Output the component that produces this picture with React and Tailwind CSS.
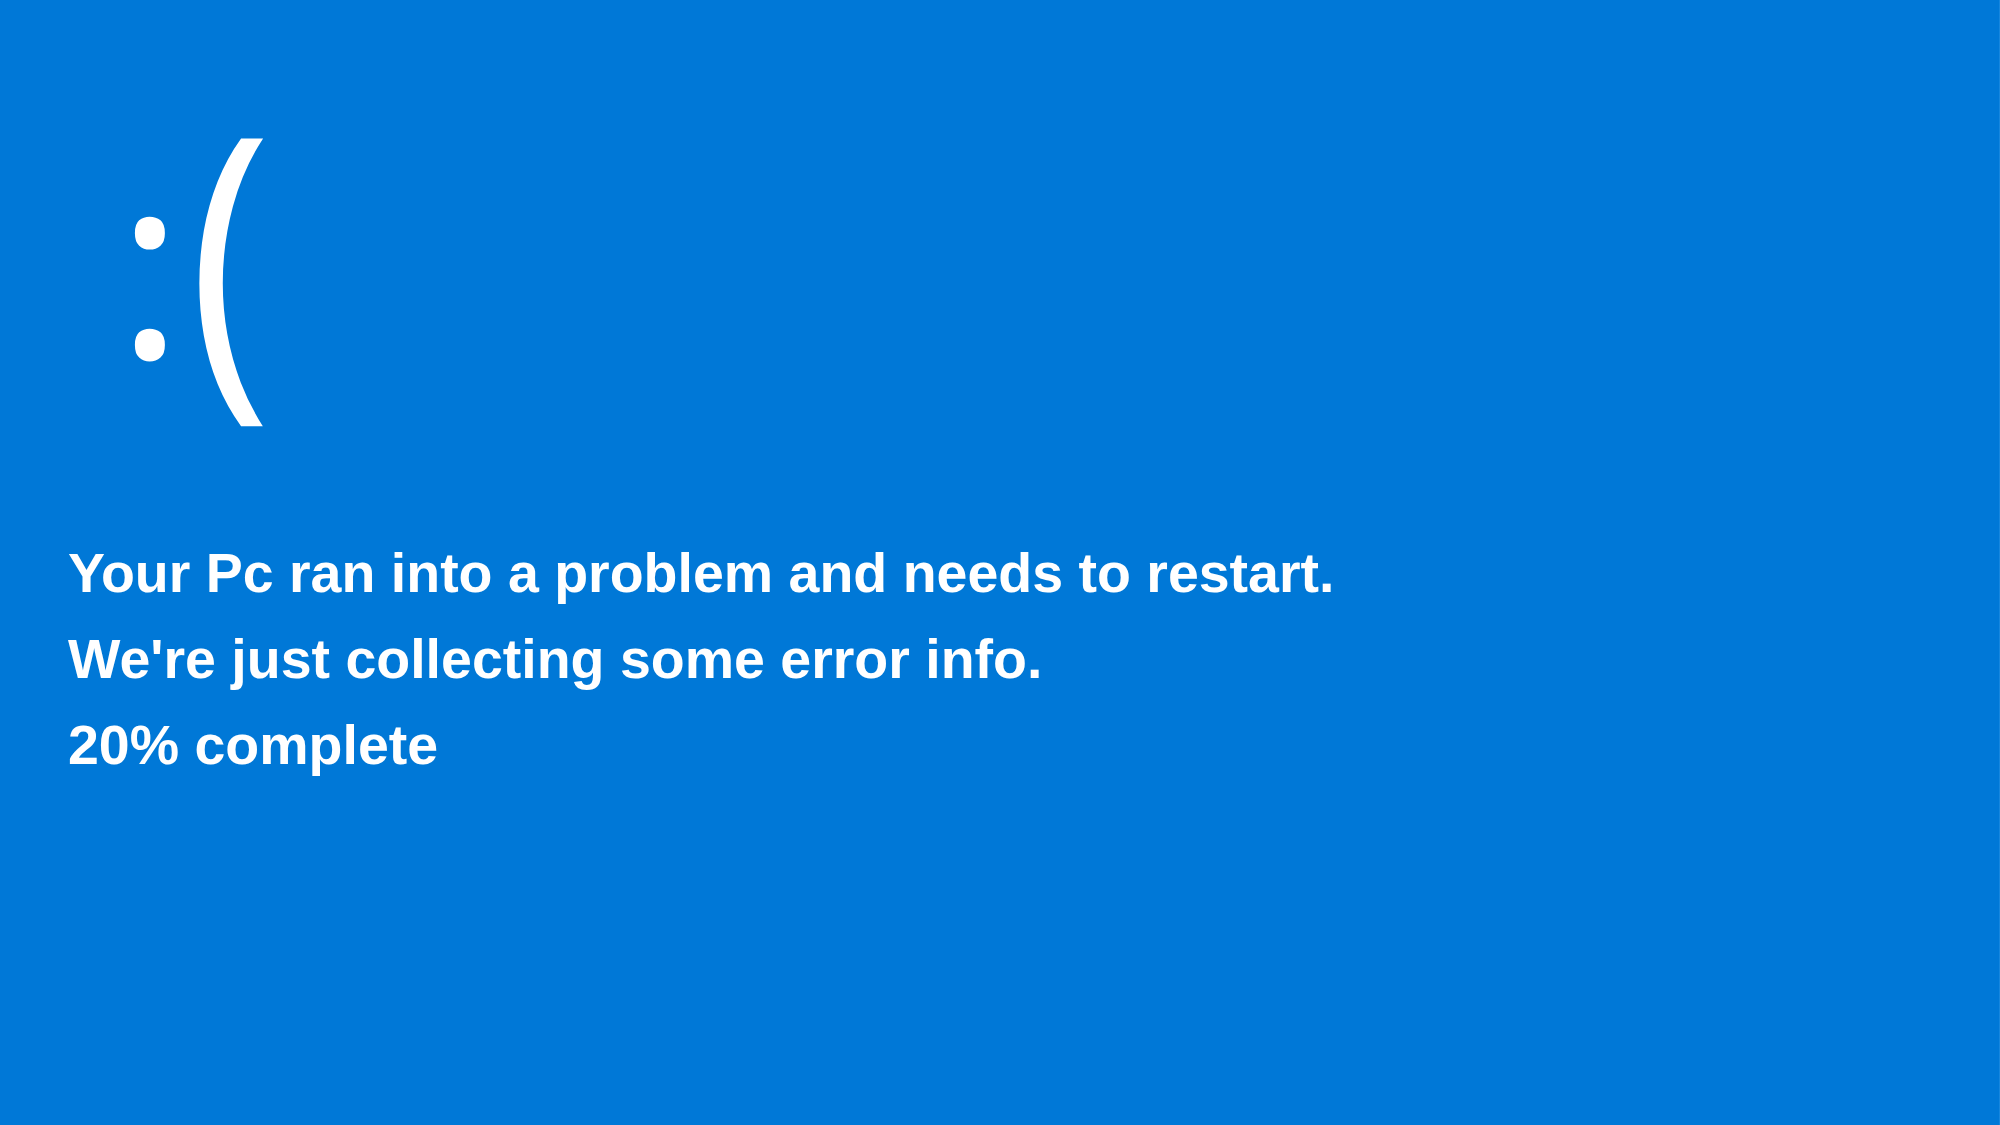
import React from 'react';

export default function App() {
  return (
    <div
      className="w-full h-[1125px] bg-[#0078d7] border-r border-[#1787de] text-white pl-[68px] overflow-hidden"
      style={{ fontFamily: '"Liberation Sans", Arial, sans-serif' }}
    >
      {/* sad face */}
      <div
        className="flex items-start pt-[81px] pl-[48px] h-[530px]"
        style={{ fontFamily: '"Open Sans", "Noto Sans", sans-serif' }}
      >
        <span className="text-[258px] leading-[1] font-medium mt-[48px]">:</span>
        <span className="text-[330px] leading-[1] font-normal ml-[4px] scale-x-[0.86] origin-left">(</span>
      </div>

      {/* message */}
      <div className="font-bold text-[55.5px] leading-[86px]">
        <p>Your Pc ran into a problem and needs to restart.</p>
        <p>We're just collecting some error info.</p>
        <p>20% complete</p>
      </div>
    </div>
  );
}
